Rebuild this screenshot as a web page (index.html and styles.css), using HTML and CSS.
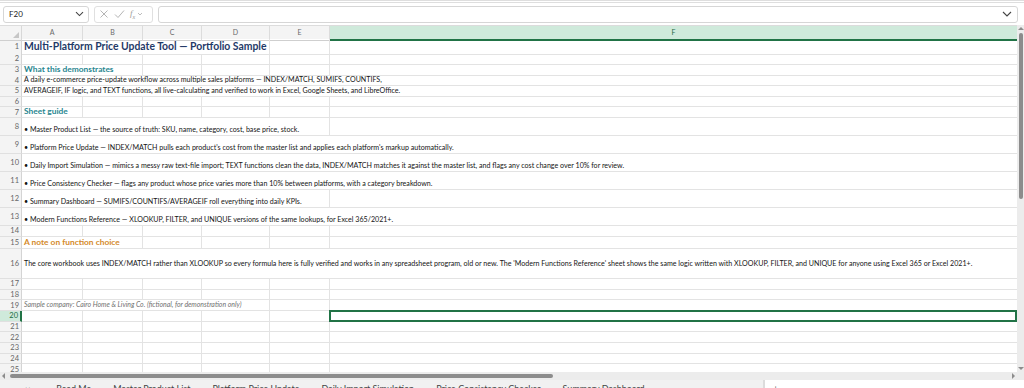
FILE: index.html
```html
<!DOCTYPE html>
<html lang="en">
<head>
  <meta charset="UTF-8" />
  <meta name="viewport" content="width=device-width, initial-scale=1.0" />
  <title>Multi-Platform Price Update Tool</title>
  <link rel="stylesheet" href="styles.css">
</head>
<body>
  <div class="topbar">
    <div class="namebox">
      <span>F20</span>
      <svg width="9" height="6" viewBox="0 0 9 6"><path d="M1 1.2 L4.5 4.6 L8 1.2" fill="none" stroke="#444" stroke-width="1.1"/></svg>
    </div>
    <div class="fnbox">
      <svg width="10" height="10" viewBox="0 0 10 10"><path d="M1.5 1.5 L8.5 8.5 M8.5 1.5 L1.5 8.5" stroke="#b5b5b5" stroke-width="1"/></svg>
      <svg width="11" height="10" viewBox="0 0 11 10"><path d="M1 5.5 L4 8.5 L10 1.5" fill="none" stroke="#b5b5b5" stroke-width="1"/></svg>
      <span class="fx">f<sub>x</sub></span>
      <svg width="6" height="4" viewBox="0 0 6 4"><path d="M1 1 L3 3 L5 1" fill="none" stroke="#b5b5b5" stroke-width="0.9"/></svg>
    </div>
    <div class="formula">
      <svg width="10" height="6" viewBox="0 0 10 6"><path d="M1 1 L5 5 L9 1" fill="none" stroke="#444" stroke-width="1.1"/></svg>
    </div>
  </div>

  <div class="workspace">
    <div class="grid" id="grid">
      <div class="row colheads">
        <div class="corner"></div>
        <div class="ch">A</div>
        <div class="ch">B</div>
        <div class="ch">C</div>
        <div class="ch">D</div>
        <div class="ch">E</div>
        <div class="ch sel">F</div>
      </div>
    </div>
    <div class="vscroll">
      <div class="arrow up"></div>
      <div class="vthumb"></div>
      <div class="arrow down"></div>
    </div>
  </div>

  <div class="hscroll">
    <div class="arrow left"></div>
    <div class="hthumb"></div>
    <div class="arrow right"></div>
  </div>

  <div class="tabs">
    <div class="tabnames">
      <span>◂ ▸</span>
      <span>Read Me</span>
      <span>Master Product List</span>
      <span>Platform Price Update</span>
      <span>Daily Import Simulation</span>
      <span>Price Consistency Checker</span>
      <span>Summary Dashboard</span>
    </div>
    <div class="tabrest"><span>+</span></div>
  </div>

  <script>
    // rows: height class, text, text class, how many columns the text runs over
    const rows = [
      { h: "h15", text: "Multi-Platform Price Update Tool — Portfolio Sample", cls: "title", span: 4 },
      { h: "" },
      { h: "", text: "What this demonstrates", cls: "teal", span: 2 },
      { h: "", text: "A daily e-commerce price-update workflow across multiple sales platforms — INDEX/MATCH, SUMIFS, COUNTIFS,", span: 6 },
      { h: "", text: "AVERAGEIF, IF logic, and TEXT functions, all live-calculating and verified to work in Excel, Google Sheets, and LibreOffice.", span: 6 },
      { h: "" },
      { h: "", text: "Sheet guide", cls: "teal", span: 1 },
      { h: "h18", text: "• Master Product List — the source of truth: SKU, name, category, cost, base price, stock.", span: 5 },
      { h: "h18", text: "• Platform Price Update — INDEX/MATCH pulls each product's cost from the master list and applies each platform's markup automatically.", span: 6 },
      { h: "h18", text: "• Daily Import Simulation — mimics a messy raw text-file import; TEXT functions clean the data, INDEX/MATCH matches it against the master list, and flags any cost change over 10% for review.", span: 6 },
      { h: "h18", text: "• Price Consistency Checker — flags any product whose price varies more than 10% between platforms, with a category breakdown.", span: 6 },
      { h: "h18", text: "• Summary Dashboard — SUMIFS/COUNTIFS/AVERAGEIF roll everything into daily KPIs.", span: 5 },
      { h: "h18", text: "• Modern Functions Reference — XLOOKUP, FILTER, and UNIQUE versions of the same lookups, for Excel 365/2021+.", span: 6 },
      { h: "h11" },
      { h: "h12", text: "A note on function choice", cls: "orange", span: 2 },
      { h: "h30", text: "The core workbook uses INDEX/MATCH rather than XLOOKUP so every formula here is fully verified and works in any spreadsheet program, old or new. The 'Modern Functions Reference' sheet shows the same logic written with XLOOKUP, FILTER, and UNIQUE for anyone using Excel 365 or Excel 2021+.", cls: "mid", span: 6 },
      { h: "" },
      { h: "" },
      { h: "", text: "Sample company: Cairo Home & Living Co. (fictional, for demonstration only)", cls: "note", span: 4 },
      { h: "", active: true },
      { h: "" }, { h: "" }, { h: "" }, { h: "" }, { h: "" }
    ];

    const grid = document.getElementById("grid");
    rows.forEach((r, i) => {
      const row = document.createElement("div");
      row.className = "row " + r.h;
      if (r.active) row.classList.add("active");

      let html = `<div class="rh">${i + 1}</div>`;
      let col = 0;
      if (r.text) {
        html += `<div class="c txt span${r.span} ${r.cls || ""}"><span>${r.text}</span></div>`;
        col = r.span;
      }
      for (; col < 6; col++) {
        html += `<div class="c${col === 5 && r.active ? " cur" : ""}"></div>`;
      }
      row.innerHTML = html;
      grid.appendChild(row);
    });
  </script>
</body>
</html>
```

FILE: styles.css
```css
* {
  box-sizing: border-box;
}
body {
  margin: 0;
  width: 1024px;
  height: 388px;
  overflow: hidden;
  font-family: Lato, "Liberation Sans", sans-serif;
  background: #fff;
  color: #222;
}

/* formula bar */
.topbar {
  height: 25px;
  display: flex;
  align-items: center;
  gap: 5px;
  padding: 0 6px 0 3px;
  border-top: 3px double #dedede;
}
.namebox {
  width: 86px;
  height: 17px;
  border: 1px solid #d6d6d6;
  border-radius: 3px;
  display: flex;
  align-items: center;
  justify-content: space-between;
  padding: 0 4px 0 5px;
  font-size: 8px;
  color: #222;
}
.fnbox {
  width: 59px;
  height: 17px;
  border: 1px solid #e0e0e0;
  border-radius: 3px;
  display: flex;
  align-items: center;
  gap: 5px;
  padding: 0 4px;
}
.fx {
  font-family: "Liberation Serif", serif;
  font-style: italic;
  font-size: 9px;
  color: #9a9a9a;
  margin-right: -3px;
}
.fx sub {
  font-size: 6px;
}
.formula {
  flex: 1;
  height: 17px;
  border: 1px solid #d6d6d6;
  border-radius: 3px;
  display: flex;
  align-items: center;
  justify-content: flex-end;
  padding-right: 5px;
}

/* sheet */
.workspace {
  display: flex;
  height: 347px;
}
.grid {
  flex: 1;
  overflow: hidden;
  border-top: 1px solid #dcdcdc;
}
.row {
  display: grid;
  grid-template-columns: 22px 61px 60px 59px 68px 60px 1fr;
  height: 10.67px;
}
.h11 { height: 11px; }
.h12 { height: 12px; }
.h15 { height: 15px; }
.h18 { height: 18px; }
.h30 { height: 30px; }

.colheads {
  height: 13px;
  background: #f4f4f4;
}
.corner {
  position: relative;
  border-right: 1px solid #d8d8d8;
  border-bottom: 1px solid #cfcfcf;
}
.corner::after {
  content: "";
  position: absolute;
  right: 2px;
  bottom: 2px;
  border-left: 6px solid transparent;
  border-bottom: 6px solid #c6c6c6;
}
.ch {
  font-size: 7px;
  color: #6a6a6a;
  text-align: center;
  line-height: 13px;
  border-right: 1px solid #dcdcdc;
  border-bottom: 1px solid #cfcfcf;
}
.ch.sel {
  background: #cfeadb;
  color: #1d6b42;
  border-bottom: 2px solid #217346;
  border-right: none;
}

.rh {
  background: #f4f4f4;
  border-right: 1px solid #d4d4d4;
  border-bottom: 1px solid #e0e0e0;
  font-size: 7.5px;
  color: #666;
  text-align: right;
  padding-right: 2px;
  display: flex;
  align-items: center;
  justify-content: flex-end;
}
.active .rh {
  background: #cfeadb;
  color: #1d6b42;
  border-right: 2px solid #217346;
}

.c {
  border-right: 1px solid #e3e3e3;
  border-bottom: 1px solid #e3e3e3;
  min-width: 0;
}
.c:last-child {
  border-right: none;
}
.c.cur {
  border: 2px solid #217346;
  margin: -1px 0 0 -1px;
}
.txt {
  display: flex;
  align-items: flex-end;
  padding: 0 0 1px 2px;
  white-space: nowrap;
  overflow: visible;
  font-size: 7.1px;
  line-height: 9px;
  color: #141414;
}
.span1 { grid-column: span 1; }
.span2 { grid-column: span 2; }
.span4 { grid-column: span 4; }
.span5 { grid-column: span 5; }
.span6 { grid-column: span 6; }

.txt.title {
  font-size: 10.4px;
  line-height: 14px;
  font-weight: bold;
  color: #1f3a68;
}
.txt.teal {
  font-size: 8.4px;
  font-weight: bold;
  color: #27868f;
}
.txt.orange {
  font-size: 8.4px;
  font-weight: bold;
  color: #d48a2a;
}
.txt.mid {
  align-items: center;
  padding-bottom: 0;
}
.txt.note {
  font-size: 6.9px;
  font-style: italic;
  color: #6f6f6f;
}

/* scrollbars */
.vscroll {
  width: 7px;
  background: #ececec;
  display: flex;
  flex-direction: column;
  align-items: center;
  padding: 2px 0;
}
.vthumb {
  width: 4px;
  height: 166px;
  margin-top: 3px;
  background: #8c8c8c;
  border-radius: 2px;
}
.arrow.down {
  margin-top: auto;
}
.arrow {
  width: 0;
  height: 0;
}
.arrow.up {
  border-left: 3px solid transparent;
  border-right: 3px solid transparent;
  border-bottom: 3px solid #8c8c8c;
}
.arrow.down {
  border-left: 3px solid transparent;
  border-right: 3px solid transparent;
  border-top: 3px solid #8c8c8c;
}
.hscroll {
  height: 8px;
  background: #ececec;
  display: flex;
  align-items: center;
  padding: 0 9px 0 2px;
}
.hthumb {
  width: 543px;
  height: 4px;
  margin-left: 5px;
  background: #8c8c8c;
  border-radius: 2px;
}
.arrow.left {
  border-top: 3px solid transparent;
  border-bottom: 3px solid transparent;
  border-right: 3px solid #8c8c8c;
}
.arrow.right {
  margin-left: auto;
  border-top: 3px solid transparent;
  border-bottom: 3px solid transparent;
  border-left: 3px solid #8c8c8c;
}

/* sheet tabs, cut off by the window */
.tabs {
  height: 8px;
  display: flex;
  overflow: hidden;
}
.tabnames {
  width: 765px;
  background: #f1f1f1;
  border-right: 2px solid #dcdcdc;
  display: flex;
  gap: 22px;
  padding: 3px 0 0 22px;
  font-size: 9px;
  line-height: 11px;
  white-space: nowrap;
  color: #444;
}
.tabrest {
  flex: 1;
  padding: 3px 0 0 8px;
  font-size: 9px;
  line-height: 11px;
  color: #666;
}
```
